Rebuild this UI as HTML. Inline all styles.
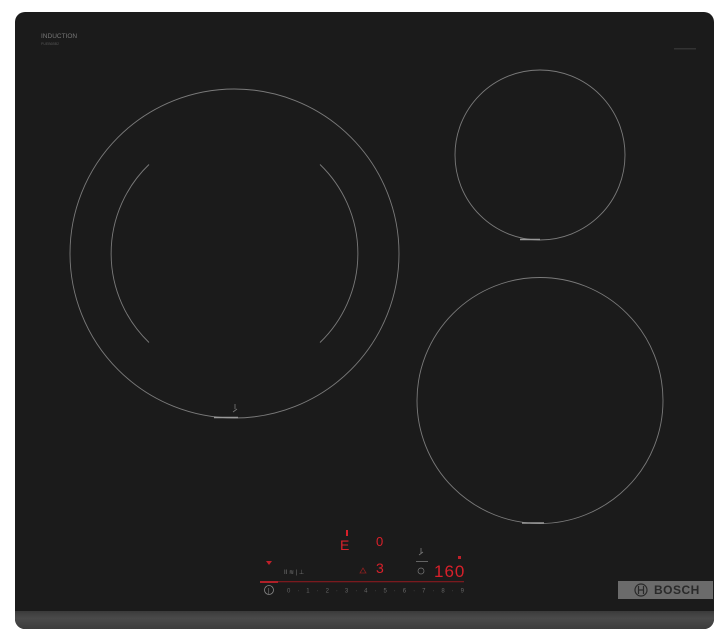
<!DOCTYPE html>
<html><head><meta charset="utf-8"><style>
html,body{margin:0;padding:0;background:#fff;width:723px;height:642px;overflow:hidden;font-family:"Liberation Sans",sans-serif}
.panel{position:absolute;left:15px;top:12px;width:699px;height:617px;background:#1b1b1b;border-radius:10px;overflow:hidden}
.strip{position:absolute;left:0;bottom:0;width:100%;height:18px;background:linear-gradient(#3a3a3a,#4a4a4a 40%,#3c3c3c)}
.bosch{position:absolute;left:603px;top:569px;width:95px;height:18px;background:#6b6b6b;color:#2a2a2a;font-weight:bold;font-size:12px;line-height:18px;letter-spacing:.5px}
</style></head><body>
<div class="panel">
<div class="strip"></div>
<div class="bosch"><svg width="14" height="14" style="position:absolute;left:16px;top:2px" viewBox="0 0 14 14"><circle cx="7" cy="7" r="6" fill="none" stroke="#2a2a2a" stroke-width="1.2"/><path d="M4.5 3v8M9.5 3v8M4.5 7h5" stroke="#2a2a2a" stroke-width="1.2" fill="none"/></svg><span style="position:absolute;left:36px;top:0">BOSCH</span></div>
</div>
<svg width="723" height="642" style="position:absolute;left:0;top:0" viewBox="0 0 723 642">
<g fill="none" stroke="#7a7a7a" stroke-width="0.9">
<circle cx="234.5" cy="253.5" r="164.5"/>
<path d="M149 164.5 A123.5 123.5 0 0 0 149 342.5"/>
<path d="M320 164.5 A123.5 123.5 0 0 1 320 342.5"/>
<circle cx="540" cy="155" r="85"/>
<circle cx="540" cy="400.5" r="123"/>
</g>
<g stroke="#999" stroke-width="1.6">
<path d="M214 417.5h24"/><path d="M520 239.5h20"/><path d="M522 523h22"/>
</g>
<text x="41" y="38" fill="#777" font-size="6.5" font-family="Liberation Sans">INDUCTION</text>
<text x="41" y="45" fill="#555" font-size="3.5" font-family="Liberation Sans">PUEB6BB2</text>
<rect x="674" y="48" width="22" height="1.5" fill="#333"/>
<path d="M233 412l4-3M235 404v5" stroke="#777" stroke-width="0.8" fill="none"/>
<path d="M266 561l3 4 3-4z" fill="#c0202a"/>
<rect x="260" y="581" width="204" height="1.3" fill="#7a1a1e"/>
<rect x="260" y="581" width="18" height="2" fill="#b02028"/>
<circle cx="269" cy="590" r="4.5" fill="none" stroke="#888" stroke-width="0.8"/>
<text x="268" y="592.5" fill="#888" font-size="6">|</text>
<text x="287" y="592.5" fill="#666" font-size="6" font-family="Liberation Sans" textLength="177" lengthAdjust="spacing">0 · 1 · 2 · 3 · 4 · 5 · 6 · 7 · 8 · 9</text>
<text x="284" y="574" fill="#777" font-size="6">II ≋ | ⊥</text>
<g fill="#d8202a" font-family="Liberation Sans">
<text x="340" y="550" font-size="14">E</text>
<text x="376" y="546" font-size="13">0</text>
<text x="376" y="573" font-size="14">3</text>
<text x="434" y="577" font-size="17" letter-spacing="1">160</text>
</g>
<rect x="346" y="530" width="2" height="6" fill="#d8202a"/>
<path d="M360 573l3-5 3 5z" fill="none" stroke="#8a2020" stroke-width="0.8"/>
<circle cx="421" cy="571" r="3" fill="none" stroke="#777" stroke-width="0.7"/>
<rect x="416" y="561" width="12" height="0.8" fill="#777"/>
<path d="M419 555l4-3M421 548v5" stroke="#777" stroke-width="0.8" fill="none"/>
<rect x="458" y="556" width="3" height="3" fill="#c0202a"/>
</svg>
</body></html>
